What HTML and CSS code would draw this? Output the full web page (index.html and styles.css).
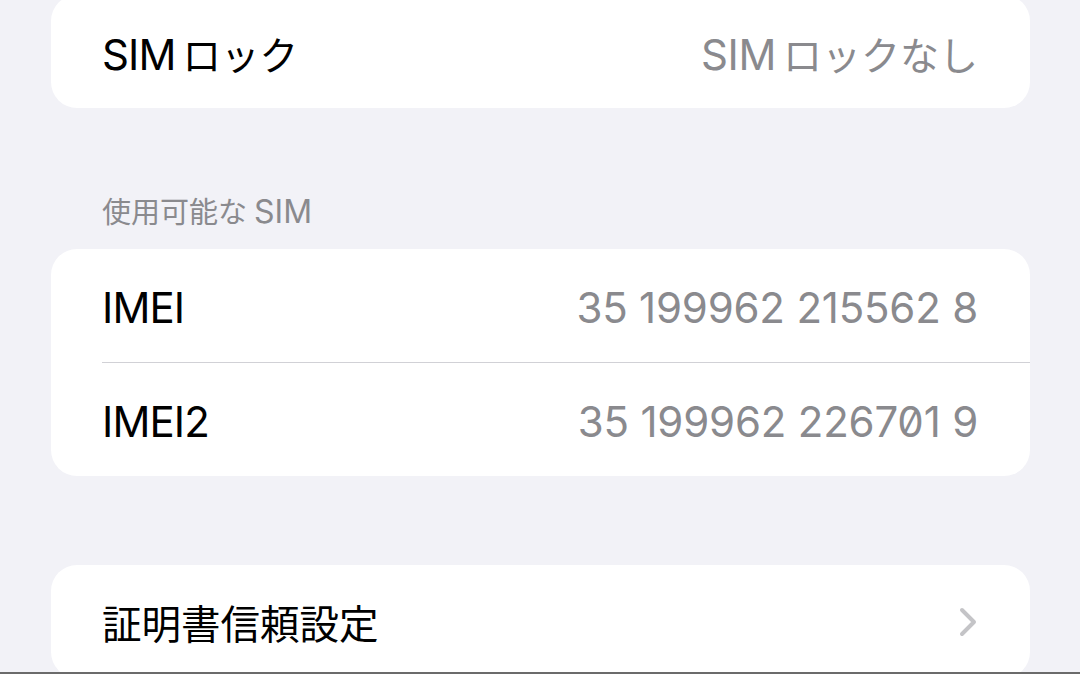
FILE: index.html
```html
<!DOCTYPE html>
<html lang="ja">
<head>
<meta charset="utf-8">
<title>情報</title>
<link rel="stylesheet" href="styles.css">
</head>
<body>
<div class="screen">
  <div class="card card-top">
    <div class="row">
      <span class="label">SIM<span class="ja gap">ロック</span></span>
      <span class="value">SIM<span class="ja gap">ロックなし</span></span>
    </div>
  </div>

  <div class="section-header"><span class="ja">使用可能な</span><span class="gap-s">SIM</span></div>
  <div class="card">
    <div class="row">
      <span class="label">IMEI</span>
      <span class="value num">35 199962 215562 8</span>
    </div>
    <div class="sep"></div>
    <div class="row">
      <span class="label">IMEI2</span>
      <span class="value num">35 199962 226701 9</span>
    </div>
  </div>

  <div class="card card-last">
    <div class="row row-plain">
      <span class="label"><span class="ja">証明書信頼設定</span></span>
      <svg class="chevron" width="18" height="30" viewBox="0 0 18 30">
        <path d="M3 3 L15 15 L3 27" fill="none" stroke="#c4c4c7" stroke-width="4" stroke-linecap="round" stroke-linejoin="round"/>
      </svg>
    </div>
  </div>
</div>
<div class="bottom-bar"></div>
</body>
</html>
```
FILE: styles.css
```css
html, body {
  margin: 0;
  padding: 0;
}
body {
  width: 1080px;
  height: 674px;
  overflow: hidden;
  background: #f2f2f7;
  font-family: Inter, "Noto Sans CJK JP", sans-serif;
  position: relative;
}
.screen {
  padding: 0 50px 0 51px;
  display: flex;
  flex-direction: column;
}
.card {
  background: #ffffff;
  border-radius: 26px;
  overflow: hidden;
}
.card-top {
  margin-top: -5px;
}
.row {
  box-sizing: border-box;
  height: 113px;
  padding: 3px 52px 0 51px;
  display: flex;
  align-items: center;
  justify-content: space-between;
}
.row-plain {
  padding-top: 0;
}
.label {
  font-size: 42px;
  color: #000000;
  letter-spacing: -0.9px;
}
.value {
  font-size: 42px;
  color: #8a8a8e;
  letter-spacing: -0.4px;
}
.label .ja {
  font-size: 38.5px;
  letter-spacing: 0;
}
.value .ja {
  font-size: 39px;
  letter-spacing: 0;
}
.card-last .label .ja {
  font-size: 39.5px;
}
.gap {
  margin-left: 7px;
}
.num {
  font-feature-settings: "zero" 1;
  letter-spacing: -0.2px;
}
.sep {
  height: 1px;
  background: #d1d1d6;
  margin-left: 51px;
}
.section-header {
  font-size: 29px;
  color: #8a8a8e;
  padding: 84px 51px 16px;
  line-height: 40px;
}
.gap-s {
  margin-left: 7px;
  font-size: 32px;
}
.card-last {
  margin-top: 89px;
}
.chevron {
  display: block;
  margin-right: 1px;
}
.bottom-bar {
  position: absolute;
  left: 0;
  right: 0;
  bottom: 0;
  height: 2px;
  background: #6b6b6b;
}
```
